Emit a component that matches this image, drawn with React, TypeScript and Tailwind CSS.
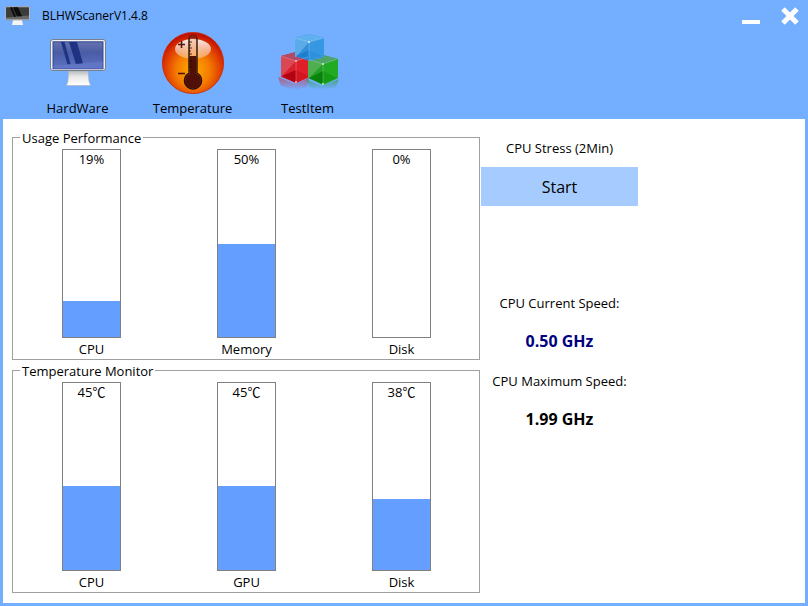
import type { ReactNode } from 'react';

type Gauge = { name: string; value: string; fill: number };

const usage: Gauge[] = [
  { name: 'CPU', value: '19%', fill: 19 },
  { name: 'Memory', value: '50%', fill: 50 },
  { name: 'Disk', value: '0%', fill: 0 },
];

const temperatures: Gauge[] = [
  { name: 'CPU', value: '45℃', fill: 45 },
  { name: 'GPU', value: '45℃', fill: 45 },
  { name: 'Disk', value: '38℃', fill: 38 },
];

function AppIcon() {
  return (
    <svg width="26" height="20" viewBox="0 0 26 20" aria-hidden="true">
      <path d="M8 14h9l1 5H7z" fill="#f4f4f4" />
      <rect x="0.3" y="0.5" width="24.500" height="13.500" rx="1" fill="#e6e6e6" stroke="#8a8f98" strokeWidth="0.6" />
      <rect x="1" y="1.2" width="23" height="12" fill="#3c3c3c" />
      <path d="M1 13.200V11.500l23-2v3.700z" fill="#686868" />
      <path d="M5 1.200h2l4 9.500H9zM8 1.200h5l4 9h-5z" fill="#0c0c0c" />
    </svg>
  );
}

function MonitorIcon() {
  return (
    <svg width="58" height="52" viewBox="0 -2 58 52" aria-hidden="true">
      <defs>
        <linearGradient id="screen" x1="0" y1="0" x2="0" y2="1">
          <stop offset="0" stopColor="#6573ae" />
          <stop offset="0.4" stopColor="#4a5ca6" />
          <stop offset="1" stopColor="#5c72c4" />
        </linearGradient>
        <linearGradient id="stand" x1="0" y1="0" x2="0" y2="1">
          <stop offset="0" stopColor="#b9bcc0" />
          <stop offset="0.4" stopColor="#e9e9e9" />
          <stop offset="1" stopColor="#ffffff" />
        </linearGradient>
      </defs>
      <path d="M19.500 33h19.500l1 10 1.500 4.500H17.500l1.500-4.500z" fill="url(#stand)" stroke="#a9aeb5" strokeWidth="0.6" />
      <rect x="1.500" y="1.500" width="55" height="31" rx="2.500" fill="#eff0f0" stroke="#70777f" strokeWidth="0.9" />
      <rect x="4" y="3.800" width="50" height="27" fill="url(#screen)" stroke="#2c3f92" strokeWidth="0.9" />
      <path d="M12 4h3.500l6 22-3 .5zM20 4h8l6 21.500-7 .8z" fill="#1f3385" />
      <path d="M4.400 28l49.200-4.500v7H4.400z" fill="#6679c9" opacity="0.7" />
    </svg>
  );
}

function ThermometerIcon() {
  return (
    <svg width="64" height="64" viewBox="0 0 64 64" aria-hidden="true">
      <defs>
        <radialGradient id="ball" cx="0.5" cy="0.62" r="0.6">
          <stop offset="0" stopColor="#ffae00" />
          <stop offset="0.45" stopColor="#f57c00" />
          <stop offset="0.8" stopColor="#dc3500" />
          <stop offset="1" stopColor="#bd0d00" />
        </radialGradient>
        <linearGradient id="gloss" x1="0" y1="0" x2="0" y2="1">
          <stop offset="0" stopColor="#fff" stopOpacity="0.9" />
          <stop offset="1" stopColor="#fff" stopOpacity="0.3" />
        </linearGradient>
      </defs>
      <circle cx="32" cy="33" r="30.600" fill="url(#ball)" stroke="#cf2600" strokeWidth="0.8" />
      <ellipse cx="32" cy="19" rx="18" ry="10" fill="url(#gloss)" />
      <path d="M28 9.500a4 4 0 0 1 8 0V43a8.500 8.500 0 1 1-8 0z" fill="#f2a06c" fillOpacity="0.35" stroke="#241000" strokeWidth="1.400" />
      <path d="M28.500 26h7v17.500a8 8 0 1 1-7 0z" fill="#501008" />
      <path d="M28.500 8.500a3.500 3.500 0 0 1 7 0z" fill="#8c1f12" />
      <path d="M28 12h3M28 15h2M28 18h3M28 21h2M28 24h3M28 28h2M28 31h3M28 34h2M28 37h3" stroke="#240600" strokeWidth="0.8" />
      <path d="M17 14.500h7M20.500 11v7" stroke="#51150d" strokeWidth="1.600" />
      <path d="M17 43.500h7" stroke="#51150d" strokeWidth="1.600" />
    </svg>
  );
}

function CubesIcon() {
  return (
    <svg width="64" height="64" viewBox="-1 -1 64 64" aria-hidden="true">
      <defs>
        <linearGradient id="redGlow" x1="0" y1="0" x2="0" y2="1">
          <stop offset="0" stopColor="#cf2838" stopOpacity="0.6" />
          <stop offset="1" stopColor="#cf2838" stopOpacity="0" />
        </linearGradient>
        <linearGradient id="greenGlow" x1="0" y1="0" x2="0" y2="1">
          <stop offset="0" stopColor="#299a3c" stopOpacity="0.6" />
          <stop offset="1" stopColor="#299a3c" stopOpacity="0" />
        </linearGradient>
      </defs>
      <path d="M1 46l17 7 14-6-2 9-12 3-14-4z" fill="url(#redGlow)" />
      <path d="M29 48l15 7 18-7-3 8-15 3-12-3z" fill="url(#greenGlow)" />
      <path d="M4 25l15-4 14 4v21l-14 6-15-6z" fill="#d81f2b" />
      <path d="M4 25l15-4 14 4-14 5z" fill="#b04a66" />
      <path d="M4 25l15 5L5 45H4z" fill="#dd5964" opacity="0.7" />
      <path d="M5 45l14-6 13 6-13 7z" fill="#b30312" />
      <path d="M19 30l14-5v21l-14 6z" fill="#e81f2c" opacity="0.6" />
      <path d="M31 28l15-4 15 4v19l-15 7-15-7z" fill="#23a027" />
      <path d="M31 28l15-4 15 4-15 5z" fill="#4fa46c" />
      <path d="M31 28l15 5L32 47h-1z" fill="#63b45f" opacity="0.7" />
      <path d="M32 47l14-7 14 7-14 6z" fill="#08820b" />
      <path d="M46 33l15-5v19l-15 7z" fill="#20b51e" opacity="0.5" />
      <path d="M18 7l14-4 15 4v19l-15 4-14-5z" fill="#318fda" />
      <path d="M18 7l14-4 15 4-15 4z" fill="#5fb0ee" />
      <path d="M18 7l14 4L19 26h-1z" fill="#68b2ec" opacity="0.8" />
      <path d="M19 25l13-6 14 6-14 4z" fill="#1d7fce" />
      <path d="M32 11l15-4v19l-15 4z" fill="#3b9de8" opacity="0.6" />
      <path d="M32 11v19M19 30v22M46 33v20M18 7l14 4 15-4M4 25l15 5 12-4M33 29l13 4 14-5" fill="none" stroke="#fff" strokeOpacity="0.28" strokeWidth="0.8" />
      <circle cx="32" cy="11" r="1" fill="#d7f0ff" />
      <circle cx="19" cy="30" r="0.900" fill="#ffc9cf" />
      <circle cx="19" cy="51" r="0.900" fill="#ffc9cf" />
      <circle cx="46" cy="33" r="0.900" fill="#d3ffd1" />
      <circle cx="46" cy="53" r="0.900" fill="#d3ffd1" />
    </svg>
  );
}

function NavItem({ label, children }: { label: string; children: ReactNode }) {
  return (
    <button type="button" className="flex w-[115px] flex-col items-center gap-1">
      <span className="flex h-16 items-center justify-center">{children}</span>
      <span className="leading-5">{label}</span>
    </button>
  );
}

function GaugeGroup({ title, gauges }: { title: string; gauges: Gauge[] }) {
  return (
    <fieldset className="min-w-0 border border-[#a0a0a0]">
      <legend className="ml-[7px] px-0.5 pt-px leading-[18px]">{title}</legend>
      <div className="grid grid-cols-3 pl-px pt-0.5">
        {gauges.map((g) => (
          <div key={g.name} className="flex flex-col items-center gap-px">
            <div className="relative h-[189px] w-[59px] border border-[#808080] text-center">
              <div className="absolute inset-x-0 bottom-0 bg-[#649fff]" style={{ height: `${g.fill}%` }} />
              <span className="relative block leading-[19px]">{g.value}</span>
            </div>
            <span className="leading-5">{g.name}</span>
          </div>
        ))}
      </div>
    </fieldset>
  );
}

export default function App() {
  return (
    <div className="flex min-h-screen flex-col bg-[#73aeff] px-[3px] pb-[3px] font-['Open_Sans','Noto_Sans_CJK_SC',sans-serif] text-[13px] text-black">
      <header>
        <div className="flex h-[30px] items-center pl-0.5 pr-[5px] pt-0.5">
          <AppIcon />
          <h1 className="ml-[11px] flex-1 text-xs leading-5">BLHWScanerV1.4.8</h1>
          <button type="button" aria-label="Minimize" className="mr-[19px] flex h-[18px] items-end">
            <svg width="20" height="6" viewBox="0 0 20 6" aria-hidden="true">
              <rect x="1" y="1" width="18" height="4" rx="0.5" fill="#fff" />
            </svg>
          </button>
          <button type="button" aria-label="Close">
            <svg width="20" height="20" viewBox="0 0 20 20" aria-hidden="true">
              <path d="M3 3l14 14M17 3L3 17" stroke="#fff" strokeWidth="5" />
            </svg>
          </button>
        </div>
        <nav className="flex h-[89px] items-start pl-[17px]">
          <NavItem label="HardWare"><MonitorIcon /></NavItem>
          <NavItem label="Temperature"><ThermometerIcon /></NavItem>
          <NavItem label="TestItem"><CubesIcon /></NavItem>
        </nav>
      </header>
      <main className="grid flex-1 grid-cols-[468fr_157fr_166fr] items-start gap-px bg-white pl-[9px] pt-[9px]">
        <div className="flex flex-col gap-px">
          <GaugeGroup title="Usage Performance" gauges={usage} />
          <GaugeGroup title="Temperature Monitor" gauges={temperatures} />
        </div>
        <section className="flex flex-col text-center">
          <h2 className="mt-2.5 leading-5">CPU Stress (2Min)</h2>
          <button type="button" className="mt-[9px] h-[39px] bg-[#a6cbff] text-base">Start</button>
          <dl className="mt-[87px]">
            <dt className="leading-5">CPU Current Speed:</dt>
            <dd className="my-[18px] text-base font-bold leading-5 text-[#000080]">0.50 GHz</dd>
            <dt className="mt-5 leading-5">CPU Maximum Speed:</dt>
            <dd className="my-[18px] text-base font-bold leading-5">1.99 GHz</dd>
          </dl>
        </section>
      </main>
    </div>
  );
}
